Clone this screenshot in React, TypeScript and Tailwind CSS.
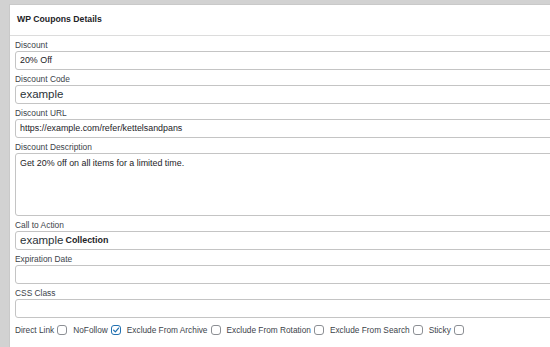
import React from "react";

const font = { fontFamily: '"Liberation Sans", Arial, sans-serif' };

function Field({ label, children, tall }: { label: string; children?: React.ReactNode; tall?: boolean }) {
  return (
    <div className="flex flex-col mb-[3px]">
      <div className="text-[8.4px] leading-[12px] text-[#3c434a]">{label}</div>
      <div
        className={`${tall ? "h-[63px] items-start pt-[3px]" : "h-[19px] items-center"} flex w-[560px] rounded-[3px] border border-[#c4c4c4] bg-white pl-[4px] text-[8.9px] text-[#1d2327]`}
      >
        {children}
      </div>
    </div>
  );
}

function Box({ checked }: { checked?: boolean }) {
  return (
    <span
      className={`ml-[3px] mr-[6px] flex h-[10px] w-[10px] items-center justify-center rounded-[3px] bg-white ${
        checked ? "border-[1.5px] border-[#2271b1]" : "border border-[#8c8f94]"
      }`}
    >
      {checked && (
        <svg width="8" height="8" viewBox="0 0 10 10">
          <path d="M2 5.2 L4.2 7.4 L8.2 2.6" fill="none" stroke="#2271b1" strokeWidth="1.6" strokeLinecap="round" strokeLinejoin="round" />
        </svg>
      )}
    </span>
  );
}

export default function App() {
  return (
    <div className="h-[347px] w-[550px] overflow-hidden bg-[#d2d2d2] pl-[9px] pt-[4px]" style={font}>
      <div className="h-[400px] w-[600px] border-l border-t border-[#c9c9c9] bg-white">
        <div className="flex h-[31px] items-center border-b border-[#dcdcdc] pl-[7px] text-[8.7px] font-bold text-[#1d2327]">
          WP Coupons Details
        </div>
        <div className="pl-[5px] pt-[3px]">
          <Field label="Discount">20% Off</Field>
          <Field label="Discount Code">
            <span className="text-[11.5px] text-[#2c3338]">example</span>
          </Field>
          <Field label="Discount URL">https://example.com/refer/kettelsandpans</Field>
          <Field label="Discount Description" tall>
            Get 20% off on all items for a limited time.
          </Field>
          <Field label="Call to Action">
            <span className="text-[11.5px] text-[#2c3338]">example</span>
            <span className="ml-[2px] font-semibold">Collection</span>
          </Field>
          <Field label="Expiration Date" />
          <Field label="CSS Class" />
          <div className="mt-[6px] flex items-center text-[8.3px] text-[#3c434a]">
            <span>Direct Link</span>
            <Box />
            <span>NoFollow</span>
            <Box checked />
            <span>Exclude From Archive</span>
            <Box />
            <span>Exclude From Rotation</span>
            <Box />
            <span>Exclude From Search</span>
            <Box />
            <span>Sticky</span>
            <Box />
          </div>
        </div>
      </div>
    </div>
  );
}
